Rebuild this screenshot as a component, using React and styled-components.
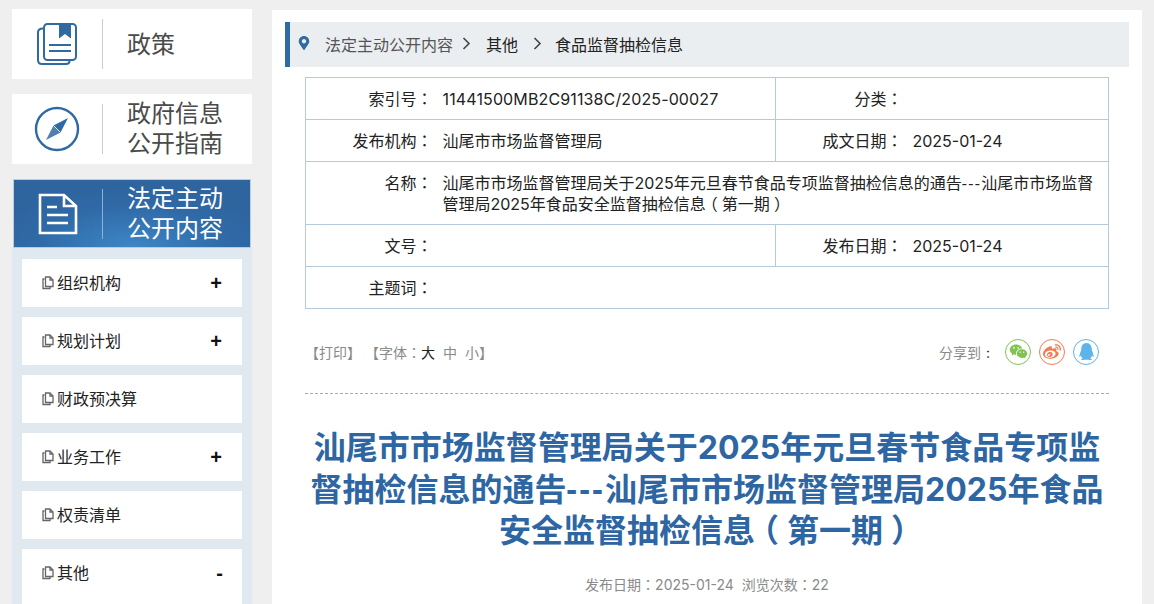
import React from "react";
import styled, { createGlobalStyle } from "styled-components";
import { FaMapMarkerAlt, FaWeibo, FaQq } from "react-icons/fa";
import { RiWechatFill } from "react-icons/ri";

const GlobalStyle = createGlobalStyle`
  html, body {
    margin: 0;
    padding: 0;
    height: 100%;
    overflow: hidden;
    background: #efefef;
    font-family: "Inter", "Noto Sans CJK SC", sans-serif;
  }
  * { box-sizing: border-box; }
`;

const Page = styled.div`
  display: flex;
  align-items: flex-start;
  gap: 20px;
  padding: 9px 12px 0;
  height: 100vh;
  overflow: hidden;
`;

const Sidebar = styled.aside`
  width: 240px;
  flex-shrink: 0;
`;

const NavCard = styled.a`
  display: flex;
  align-items: center;
  height: ${p => (p.$active ? "69px" : "70px")};
  margin: ${p => (p.$active ? "15px 1px 0" : "0 0 15px")};
  background: ${p =>
    p.$active
      ? "radial-gradient(ellipse 60% 90% at 50% 100%, #3d86c6 0%, #2f69a6 70%, #2e659f 100%)"
      : "#fff"};
  border: ${p => (p.$active ? "1px solid #b9cde0" : "none")};
  color: ${p => (p.$active ? "#fff" : "#4a4a4a")};
`;

const NavIcon = styled.div`
  width: ${p => (p.$active ? "88px" : "90px")};
  display: flex;
  justify-content: center;
  padding-right: 1px;
`;

const NavLabel = styled.div`
  height: 50px;
  border-left: 1px solid ${p => (p.$active ? "#8fb0d2" : "#ccc")};
  padding: ${p => (p.$single ? "2px" : "0")} 0 0 24px;
  display: flex;
  align-items: center;
  font-size: 24px;
  line-height: 30px;
`;

const SubMenu = styled.div`
  background: #dfe9ef;
  padding: 11px 10px 0;
  display: flex;
  flex-direction: column;
  gap: 10px;
`;

const SubItem = styled.a`
  height: ${p => (p.$open ? "120px" : "48px")};
  background: #fff;
  display: flex;
  align-items: flex-start;
  padding: 13px 20px 0;
  font-size: 16px;
  line-height: 22px;
  color: #222;
`;

const PageGlyph = styled.span`
  display: flex;
  padding-top: 4px;
`;

const SubText = styled.span`
  margin-left: 3px;
  flex: 1;
`;

const Toggle = styled.span`
  color: #111;
  font-size: 20px;
  font-weight: 600;
  font-family: "Liberation Sans", sans-serif;
  margin-right: ${p => (p.$minus ? "-1px" : "0")};
`;

const Main = styled.main`
  width: 870px;
  flex-shrink: 0;
  margin-top: 1px;
  min-height: 700px;
  background: #fff;
  padding: 12px 13px 0;
`;

const Crumbs = styled.div`
  height: 45px;
  background: #ebeef1;
  border-left: 5px solid #2f6aa3;
  display: flex;
  align-items: center;
  padding: 0 0 2px 7px;
  font-size: 16px;
  color: #222;
`;

const Pin = styled.span`
  display: flex;
  color: #2f6aa3;
  font-size: 14px;
  margin: 0 14px 2px 0;
`;

const CrumbLink = styled.a`
  color: ${p => (p.$muted ? "#555" : "#222")};
`;

const Chevron = styled.svg`
  width: 9px;
  height: 13px;
  margin: ${p => p.$gap};
`;

const Body = styled.div`
  padding: 10px 20px 0;
`;

const InfoTable = styled.table`
  width: 804px;
  border-collapse: collapse;
  table-layout: fixed;
  font-size: 16px;
  color: #222;
`;

const Row = styled.tr`
  height: ${p => (p.$tall ? "63px" : "42px")};
`;

const Cell = styled.td`
  border: 1px solid #b4cadb;
  padding: 2px 0 0;
  line-height: 21px;
`;

const Label = styled(Cell)`
  text-align: right;
  border-right: none;
  vertical-align: ${p => (p.$top ? "top" : "middle")};
  padding-top: ${p => (p.$top ? "11px" : "2px")};
`;

const Value = styled(Cell)`
  padding-left: 10px;
  padding-right: 10px;
  border-left: none;
`;

const Serial = styled.span`
  letter-spacing: 0.13px;
`;

const Line = styled.span`
  display: block;
  white-space: nowrap;
`;

// colon centred in its box as in the page font
const Fw = styled.span`
  font-family: "Noto Sans CJK TC", sans-serif;
  line-height: 0;
`;

const Dash = styled.span`
  font-family: "Open Sans", sans-serif;
  letter-spacing: 0.08em;
  line-height: 0;
`;

// page font centres the full width brackets: halve them, then pad both sides
const Paren = styled.span`
  font-feature-settings: "halt";
  padding: 0 0.25em;
`;

const Tools = styled.div`
  display: flex;
  align-items: center;
  justify-content: space-between;
  height: 85px;
  padding: 1px 10px 0 0;
  border-bottom: 1px dashed #aaa;
  font-size: 14px;
  color: #8a8a8a;
`;

const Sizes = styled.div`
  display: flex;
  align-items: center;
`;

const PrintBtn = styled.span`
  margin-right: 4px;
`;

const SizeBtn = styled.span`
  margin-right: ${p => p.$gap || "0"};
  color: ${p => (p.$on ? "#222" : "#8a8a8a")};
`;

const Share = styled.div`
  display: flex;
  align-items: center;
  gap: 8px;
`;

const ShareLabel = styled.span`
  margin-right: 7px;
`;

const ShareColon = styled.span`
  color: #222;
  margin-left: 5px;
`;

const ShareBtn = styled.a`
  width: 26px;
  height: 26px;
  border-radius: 50%;
  border: 1px solid ${p => p.$color};
  color: ${p => p.$color};
  display: flex;
  align-items: center;
  justify-content: center;
  font-size: ${p => p.$size || "16px"};
`;

const Title = styled.h1`
  margin: 33px 0 0;
  text-align: center;
  font-size: 32px;
  line-height: 41.5px;
  font-weight: 700;
  color: #2d66a2;
`;

const Meta = styled.div`
  margin-top: 22px;
  text-align: center;
  font-size: 14px;
  color: #8a8a8a;
`;

const MetaGap = styled.span`
  margin-left: 8px;
`;

const BookIcon = () => (
  <svg width="42" height="42" viewBox="0 0 42 42" fill="none" stroke="#2f6aa3" strokeWidth="2">
    <path d="M7 5.5 C3.5 5.5 2 7 2 9.5 V37 C2 39.5 3.5 41 6 41 H30 C32.5 41 33.5 40 33.5 38" />
    <rect x="8" y="1" width="32" height="36" rx="3.5" />
    <path d="M23 1 V15.5 L29 11 L35 15.5 V1 Z" fill="#2f6aa3" stroke="none" />
    <path d="M13 22 H35 M13 28 H35" />
  </svg>
);

const CompassIcon = () => (
  <svg width="46" height="46" viewBox="0 0 46 46" fill="none">
    <circle cx="23" cy="23" r="21" stroke="#2f6aa3" strokeWidth="2.4" />
    <path d="M34 12 L26.5 26.5 L19.5 19.5 Z" fill="#2f6aa3" />
    <path d="M12 34 L19.5 19.5 L26.5 26.5 Z" fill="#2f6aa3" opacity="0.85" />
    <path d="M19.5 19.5 L26.5 26.5" stroke="#fff" strokeWidth="0.8" />
  </svg>
);

const DocIcon = () => (
  <svg width="40" height="42" viewBox="0 0 40 42" fill="none" stroke="#fff" strokeWidth="2.6">
    <path d="M2 2 H26 L38 13 V40 H2 Z" />
    <path d="M26 2 V13 H38" />
    <path d="M9 14 H19 M9 22 H30 M9 30 H30" />
  </svg>
);

const PageIcon = () => (
  <svg width="12" height="14" viewBox="0 0 12 14" fill="none" stroke="#666" strokeWidth="1.3">
    <path d="M2.5 3 H1 V12.5 H8 V11" />
    <path d="M3.5 1 H8 L11 4 V10.5 H3.5 Z" />
    <path d="M8 1 V4 H11" />
  </svg>
);

const ChevronIcon = ({ gap }) => (
  <Chevron $gap={gap} viewBox="0 0 9 13" fill="none" stroke="#444" strokeWidth="1.6">
    <path d="M1.5 1 L7 6.5 L1.5 12" />
  </Chevron>
);

const subItems = [
  { name: "组织机构", mark: "+" },
  { name: "规划计划", mark: "+" },
  { name: "财政预决算" },
  { name: "业务工作", mark: "+" },
  { name: "权责清单" },
  { name: "其他", mark: "-", open: true },
];

const colon = <Fw>：</Fw>;
const issue = (
  <>
    <Paren>（</Paren>第一期<Paren>）</Paren>
  </>
);

export default function App() {
  return (
    <>
      <GlobalStyle />
      <Page>
        <Sidebar>
          <NavCard>
            <NavIcon><BookIcon /></NavIcon>
            <NavLabel $single>政策</NavLabel>
          </NavCard>
          <NavCard>
            <NavIcon><CompassIcon /></NavIcon>
            <NavLabel>政府信息<br />公开指南</NavLabel>
          </NavCard>
          <NavCard $active>
            <NavIcon $active><DocIcon /></NavIcon>
            <NavLabel $active>法定主动<br />公开内容</NavLabel>
          </NavCard>
          <SubMenu>
            {subItems.map(item => (
              <SubItem key={item.name} $open={item.open}>
                <PageGlyph><PageIcon /></PageGlyph>
                <SubText>{item.name}</SubText>
                {item.mark && <Toggle $minus={item.mark === "-"}>{item.mark}</Toggle>}
              </SubItem>
            ))}
          </SubMenu>
        </Sidebar>

        <Main>
          <Crumbs>
            <Pin><FaMapMarkerAlt /></Pin>
            <CrumbLink $muted>法定主动公开内容</CrumbLink>
            <ChevronIcon gap="0 15px 0 9px" />
            <CrumbLink>其他</CrumbLink>
            <ChevronIcon gap="0 13px 0 15px" />
            <CrumbLink>食品监督抽检信息</CrumbLink>
          </Crumbs>

          <Body>
            <InfoTable>
              <colgroup>
                <col style={{ width: 127 }} />
                <col style={{ width: 343 }} />
                <col style={{ width: 127 }} />
                <col />
              </colgroup>
              <tbody>
                <Row>
                  <Label>索引号{colon}</Label>
                  <Value><Serial>11441500MB2C91138C/2025-00027</Serial></Value>
                  <Label>分类{colon}</Label>
                  <Value />
                </Row>
                <Row>
                  <Label>发布机构{colon}</Label>
                  <Value>汕尾市市场监督管理局</Value>
                  <Label>成文日期{colon}</Label>
                  <Value>2025-01-24</Value>
                </Row>
                <Row $tall>
                  <Label $top>名称{colon}</Label>
                  <Value colSpan={3}>
                    <Line>汕尾市市场监督管理局关于2025年元旦春节食品专项监督抽检信息的通告<Dash>---</Dash>汕尾市市场监督</Line>
                    <Line>管理局2025年食品安全监督抽检信息{issue}</Line>
                  </Value>
                </Row>
                <Row>
                  <Label>文号{colon}</Label>
                  <Value />
                  <Label>发布日期{colon}</Label>
                  <Value>2025-01-24</Value>
                </Row>
                <Row>
                  <Label>主题词{colon}</Label>
                  <Value colSpan={3} />
                </Row>
              </tbody>
            </InfoTable>

            <Tools>
              <Sizes>
                <PrintBtn>【打印】</PrintBtn>
                <span>【字体{colon}</span>
                <SizeBtn $on $gap="8px">大</SizeBtn>
                <SizeBtn $gap="8px">中</SizeBtn>
                <span>小】</span>
              </Sizes>
              <Share>
                <ShareLabel>分享到<ShareColon>:</ShareColon></ShareLabel>
                <ShareBtn $color="#7fc44f" $size="19px"><RiWechatFill /></ShareBtn>
                <ShareBtn $color="#f47a4f" $size="18px"><FaWeibo /></ShareBtn>
                <ShareBtn $color="#5bb4ea" $size="17px"><FaQq /></ShareBtn>
              </Share>
            </Tools>

            <Title>
              <Line>汕尾市市场监督管理局关于2025年元旦春节食品专项监</Line>
              <Line>督抽检信息的通告<Dash>---</Dash>汕尾市市场监督管理局2025年食品</Line>
              <Line>安全监督抽检信息{issue}</Line>
            </Title>
            <Meta>
              发布日期{colon}2025-01-24<MetaGap>浏览次数{colon}22</MetaGap>
            </Meta>
          </Body>
        </Main>
      </Page>
    </>
  );
}
